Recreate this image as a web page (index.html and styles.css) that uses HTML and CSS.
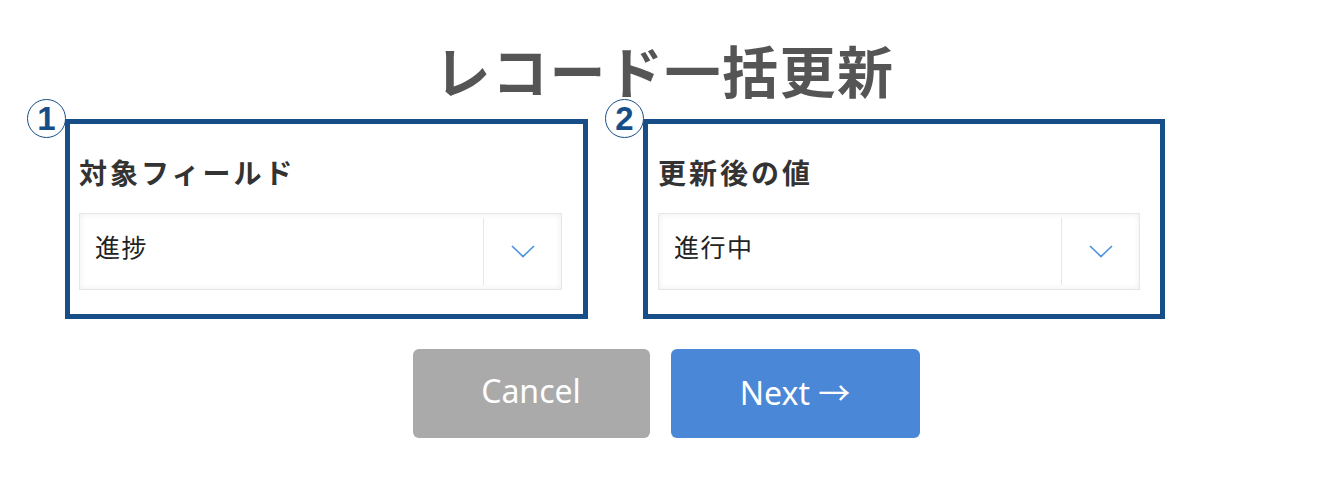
FILE: index.html
```html
<!DOCTYPE html>
<html lang="ja">
<head>
    <meta charset="UTF-8" />
    <title>レコード一括更新</title>
    <link rel="stylesheet" href="styles.css">
</head>
<body>
<h1>レコード一括更新</h1>

<div class="fields">
    <div class="box">
        <span class="num">1</span>
        <div class="label">対象フィールド</div>
        <div class="select">
            <div class="value">進捗</div>
            <div class="arrow">
                <svg width="24" height="13" viewBox="0 0 24 13"><path d="M1 1 L12 11.5 L23 1" fill="none" stroke="#4f94e0" stroke-width="1.7"/></svg>
            </div>
        </div>
    </div>
    <div class="box">
        <span class="num">2</span>
        <div class="label">更新後の値</div>
        <div class="select">
            <div class="value">進行中</div>
            <div class="arrow">
                <svg width="24" height="13" viewBox="0 0 24 13"><path d="M1 1 L12 11.5 L23 1" fill="none" stroke="#4f94e0" stroke-width="1.7"/></svg>
            </div>
        </div>
    </div>
</div>

<div class="actions">
    <button class="cancel">Cancel</button>
    <button class="next">Next →</button>
</div>
</body>
</html>
```

FILE: styles.css
```css
body {
    font-family: "Noto Sans CJK JP", "Noto Sans", sans-serif;
    background: #fff;
    color: #333;
    margin: 0;
    padding: 0;
}
h1 {
    margin: 34px 0 0;
    text-align: center;
    font-size: 56px;
    line-height: 70px;
    color: #555;
    letter-spacing: 1.5px;
    height: 85px;
}
.fields {
    display: flex;
    gap: 55px;
    padding-left: 65px;
}
.box {
    position: relative;
    height: 190px;
    border: 5px solid #174e88;
    padding: 0 21px 0 9px;
    width: 483px;
}
.box + .box {
    padding: 0 20px 0 10px;
    width: 482px;
}
.num {
    position: absolute;
    left: -43px;
    top: -25px;
    width: 37px;
    height: 37px;
    border: 1.5px solid #174e88;
    border-radius: 50%;
    color: #174e88;
    font-family: "Liberation Sans", sans-serif;
    font-weight: bold;
    font-size: 33px;
    line-height: 38px;
    text-align: center;
    background: #fff;
}
.label {
    margin-top: 28px;
    font-size: 28px;
    font-weight: bold;
    line-height: 40px;
    letter-spacing: 3px;
    color: #333;
}
.select {
    margin-top: 21px;
    height: 75px;
    border: 1px solid #e6e6e6;
    box-shadow: inset 0 0 6px rgba(0, 0, 0, 0.07);
    display: flex;
}
.value {
    flex: 1;
    padding-left: 15px;
    font-size: 25px;
    line-height: 65px;
    letter-spacing: 1.5px;
    color: #222;
}
.arrow {
    width: 77px;
    margin: 4px 0;
    border-left: 1px solid #e6e6e6;
    display: flex;
    align-items: center;
    justify-content: center;
}
.actions {
    display: flex;
    justify-content: center;
    gap: 21px;
    margin-top: 30px;
    padding-left: 3px;
}
button {
    height: 89px;
    padding: 0 0 6px;
    border: none;
    border-radius: 6px;
    color: #fff;
    font-family: "Noto Sans", "Noto Sans CJK JP", sans-serif;
    font-size: 32px;
    cursor: pointer;
}
.cancel {
    width: 237px;
    background: #aaaaaa;
}
.next {
    width: 249px;
    background: #4a87d6;
}
```
